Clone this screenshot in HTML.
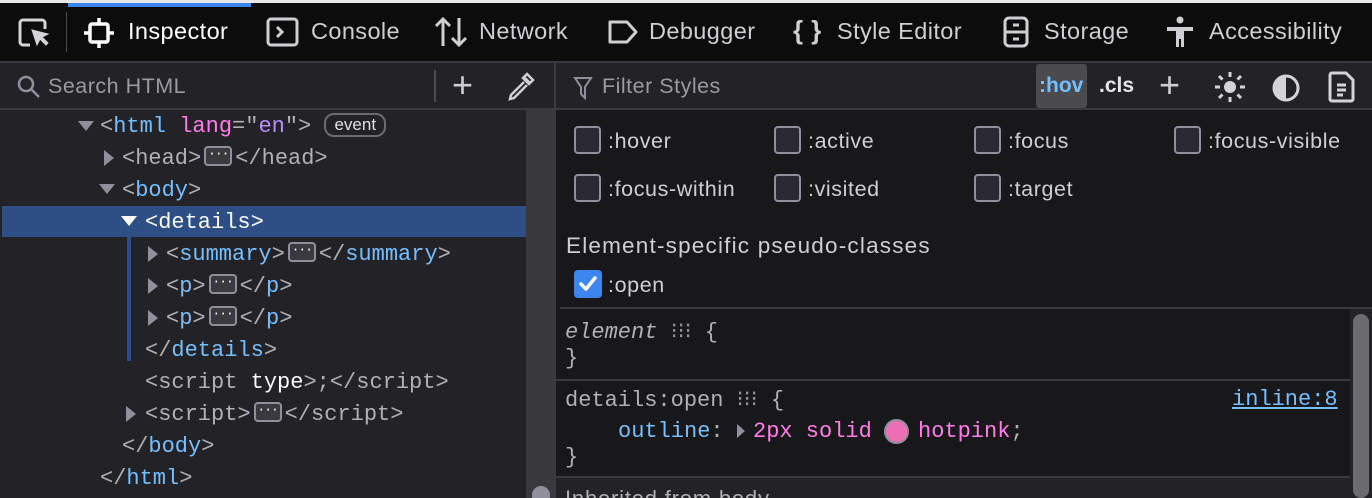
<!DOCTYPE html>
<html><head><meta charset="utf-8"><style>
*{margin:0;padding:0;box-sizing:border-box}
html,body{width:1372px;height:498px;overflow:hidden}
body{background:#18181b;font-family:"Liberation Sans",sans-serif;position:relative;color:#fbfbfe}
.a{position:absolute;white-space:nowrap}
.m{font-family:"Liberation Mono","DejaVu Sans Mono",monospace;font-size:22px}
.g{color:#b1b1b3}.b{color:#75bfff}.p{color:#ff7de9}.v{color:#b98eff}.w{color:#fbfbfe}
.tab{position:absolute;top:18px;font-size:23.5px;letter-spacing:0.4px;color:#cfcfd3}
.dots{display:inline-block;width:28px;height:20px;border:2px solid #8f8f9d;border-radius:4px;background:#3a3a3e;vertical-align:middle;margin:0 3px;position:relative;top:-2px;text-align:center;line-height:12px;font-size:13px;color:#fff;letter-spacing:-1px}
.tri{position:absolute;width:0;height:0}
.cb{position:absolute;width:27px;height:28px;border:2px solid #8f8f9d;border-radius:4px;background:#2b2a33}
.cl{position:absolute;font-size:21.5px;letter-spacing:0.6px;color:#cfcfd3}
</style></head><body>
<div class="a" style="left:0;top:0;width:1372px;height:3px;background:#e8e8ea"></div>
<div class="a" style="left:0;top:3px;width:1372px;height:58px;background:#0c0c0d"></div>
<div class="a" style="left:68px;top:3px;width:183px;height:4px;background:#3d86ef"></div>
<div class="a" style="left:66px;top:12px;width:1px;height:40px;background:#4a4a4f"></div>
<svg class="a" style="left:18px;top:18px" width="32" height="30" viewBox="0 0 32 30" fill="none" stroke="#d4d4d8" stroke-width="3"><path d="M12 27H5a3 3 0 0 1-3-3V5a3 3 0 0 1 3-3h19a3 3 0 0 1 3 3v6"/><path d="M14 12l5 15 3-6 6 6 2-2-6-6 6-3z" fill="#d4d4d8" stroke-width="1"/></svg>
<svg class="a" style="left:83px;top:16px" width="32" height="34" viewBox="0 0 32 34" fill="none" stroke="#fff" stroke-width="3.5"><rect x="7" y="8" width="18" height="18" rx="2"/><path d="M16 2v6M16 26v6M1 17h6M25 17h6"/></svg>
<div class="tab" style="left:128px;color:#fff">Inspector</div>
<svg class="a" style="left:266px;top:17px" width="34" height="30" viewBox="0 0 34 30" fill="none" stroke="#cfcfd3" stroke-width="3"><rect x="2" y="2" width="29" height="26" rx="3"/><path d="M11 10l5 5-5 5"/></svg>
<div class="tab" style="left:311px">Console</div>
<svg class="a" style="left:434px;top:16px" width="34" height="32" viewBox="0 0 34 32" fill="none" stroke="#cfcfd3" stroke-width="3"><path d="M9 30V3M2 10l7-7 7 7M25 2v27M18 22l7 7 7-7"/></svg>
<div class="tab" style="left:479px">Network</div>
<svg class="a" style="left:607px;top:19px" width="32" height="26" viewBox="0 0 32 26" fill="none" stroke="#cfcfd3" stroke-width="3"><path d="M3 3h17l9 10-9 10H3z" stroke-linejoin="round"/></svg>
<div class="tab" style="left:649px">Debugger</div>
<div class="tab" style="left:793px;font-size:26px;top:15px;font-weight:bold">{ }</div>
<div class="tab" style="left:837px">Style Editor</div>
<svg class="a" style="left:1003px;top:16px" width="26" height="32" viewBox="0 0 26 32" fill="none" stroke="#cfcfd3" stroke-width="3"><rect x="2" y="2" width="22" height="28" rx="4"/><path d="M2 16h22M10 9h6M10 23h6"/></svg>
<div class="tab" style="left:1044px">Storage</div>
<svg class="a" style="left:1166px;top:16px" width="28" height="32" viewBox="0 0 28 32"><circle cx="14" cy="4" r="3.5" fill="#cfcfd3"/><path d="M1 11h26v4h-9v16h-3v-8h-2v8h-3V15H1z" fill="#cfcfd3"/></svg>
<div class="tab" style="left:1209px">Accessibility</div>

<div class="a" style="left:0;top:61px;width:556px;height:49px;background:#232327;border-top:2px solid #3a3a3e;border-bottom:2px solid #3a3a3e"></div>
<svg class="a" style="left:17px;top:75px" width="24" height="24" viewBox="0 0 24 24" fill="none" stroke="#8f8f9d" stroke-width="2.5"><circle cx="9" cy="9" r="7"/><path d="M14 14l8 8"/></svg>
<div class="a" style="left:48px;top:74px;font-size:21.5px;letter-spacing:0.5px;color:#9a9aa0">Search HTML</div>
<div class="a" style="left:434px;top:70px;width:2px;height:32px;background:#4a4a4f"></div>
<div class="a" style="left:452px;top:64px;font-size:36px;color:#cfcfd3;font-weight:300">+</div>
<svg class="a" style="left:507px;top:72px" width="28" height="30" viewBox="0 0 28 30" fill="none" stroke="#cfcfd3" stroke-width="2.5"><path d="M17 5l6 6M20 2l6 6-4 4-6-6zM17 10L4 23l-1 4 4-1 13-13"/></svg>
<div class="a" style="left:554px;top:61px;width:2px;height:437px;background:#3a3a3e"></div>
<div class="a" style="left:556px;top:61px;width:816px;height:49px;background:#232327;border-top:2px solid #3a3a3e;border-bottom:2px solid #3a3a3e"></div>
<svg class="a" style="left:573px;top:76px" width="20" height="24" viewBox="0 0 20 24" fill="none" stroke="#8f8f9d" stroke-width="2"><path d="M2 2h16l-6 9v11l-4-4v-7z"/></svg>
<div class="a" style="left:602px;top:74px;font-size:21.5px;letter-spacing:0.5px;color:#9a9aa0">Filter Styles</div>
<div class="a" style="left:1036px;top:64px;width:51px;height:44px;background:#4a4a4f;border-radius:3px"></div>
<div class="a" style="left:1039px;top:74px;font-size:21px;font-weight:bold;color:#75bfff">:hov</div>
<div class="a" style="left:1099px;top:74px;font-size:21px;font-weight:bold;color:#e6e6ea">.cls</div>
<div class="a" style="left:1159px;top:64px;font-size:36px;color:#cfcfd3;font-weight:300">+</div>
<svg class="a" style="left:1214px;top:71px" width="32" height="32" viewBox="0 0 32 32" stroke="#d4d4d8" stroke-width="3" fill="#d4d4d8"><circle cx="16" cy="16" r="6" stroke="none"/><path d="M16 1v5M16 26v5M1 16h5M26 16h5M5 5l3.5 3.5M23.5 23.5L27 27M5 27l3.5-3.5M23.5 8.5L27 5"/></svg>
<svg class="a" style="left:1271px;top:73px" width="30" height="30" viewBox="0 0 30 30"><circle cx="15" cy="15" r="12" fill="none" stroke="#d4d4d8" stroke-width="3"/><path d="M15 3A12 12 0 0 0 15 27Z" fill="#d4d4d8"/></svg>
<svg class="a" style="left:1328px;top:71px" width="28" height="32" viewBox="0 0 28 32" fill="none" stroke="#d4d4d8" stroke-width="3"><path d="M4 2h14l7 7v19a2 2 0 0 1-2 2H4a2 2 0 0 1-2-2V4a2 2 0 0 1 2-2z"/><path d="M9 14h9M9 19h9M9 24h6"/></svg>

<!-- left tree -->
<div class="a" style="left:0;top:110px;width:526px;height:388px;background:#232327"></div>
<div class="a" style="left:526px;top:110px;width:28px;height:388px;background:#38383d"></div>
<div class="a" style="left:532px;top:486px;width:18px;height:20px;border-radius:9px;background:#8f8f9d"></div>
<div class="a" style="left:2px;top:206px;width:524px;height:31px;background:#2d4f85"></div>
<div class="a" style="left:127px;top:237px;width:4px;height:124px;background:#2d4f85"></div>
<div class="tri" style="left:78px;top:121px;border-left:8px solid transparent;border-right:8px solid transparent;border-top:10px solid #8f8f9d"></div>
<div class="tri" style="left:104px;top:150px;border-top:8px solid transparent;border-bottom:8px solid transparent;border-left:10px solid #8f8f9d"></div>
<div class="tri" style="left:99px;top:184px;border-left:8px solid transparent;border-right:8px solid transparent;border-top:10px solid #8f8f9d"></div>
<div class="tri" style="left:121px;top:216px;border-left:8px solid transparent;border-right:8px solid transparent;border-top:10px solid #fff"></div>
<div class="tri" style="left:148px;top:246px;border-top:8px solid transparent;border-bottom:8px solid transparent;border-left:10px solid #8f8f9d"></div>
<div class="tri" style="left:148px;top:278px;border-top:8px solid transparent;border-bottom:8px solid transparent;border-left:10px solid #8f8f9d"></div>
<div class="tri" style="left:148px;top:310px;border-top:8px solid transparent;border-bottom:8px solid transparent;border-left:10px solid #8f8f9d"></div>
<div class="tri" style="left:126px;top:406px;border-top:8px solid transparent;border-bottom:8px solid transparent;border-left:10px solid #8f8f9d"></div>
<div class="a m g" style="left:100px;top:114px">&lt;<span class="b">html</span> <span class="p">lang</span>="<span class="v">en</span>"&gt; <span style="display:inline-block;border:2px solid #6b6b70;border-radius:10px;padding:0 8px;font-family:'Liberation Sans',sans-serif;font-size:17px;color:#e0e0e4;line-height:20px;position:relative;top:-2px">event</span></div>
<div class="a m g" style="left:122px;top:146px">&lt;head&gt;<span class="dots">···</span>&lt;/head&gt;</div>
<div class="a m g" style="left:122px;top:178px">&lt;<span class="b">body</span>&gt;</div>
<div class="a m w" style="left:145px;top:210px">&lt;details&gt;</div>
<div class="a m g" style="left:166px;top:242px">&lt;<span class="b">summary</span>&gt;<span class="dots">···</span>&lt;/<span class="b">summary</span>&gt;</div>
<div class="a m g" style="left:166px;top:274px">&lt;<span class="b">p</span>&gt;<span class="dots">···</span>&lt;/<span class="b">p</span>&gt;</div>
<div class="a m g" style="left:166px;top:306px">&lt;<span class="b">p</span>&gt;<span class="dots">···</span>&lt;/<span class="b">p</span>&gt;</div>
<div class="a m g" style="left:145px;top:338px">&lt;/<span class="b">details</span>&gt;</div>
<div class="a m g" style="left:145px;top:370px">&lt;script <span class="w">type</span>&gt;;&lt;/script&gt;</div>
<div class="a m g" style="left:145px;top:402px">&lt;script&gt;<span class="dots">···</span>&lt;/script&gt;</div>
<div class="a m g" style="left:122px;top:434px">&lt;/<span class="b">body</span>&gt;</div>
<div class="a m g" style="left:100px;top:466px">&lt;/<span class="b">html</span>&gt;</div>

<!-- right -->
<div class="cb" style="left:574px;top:126px"></div><div class="cl" style="left:608px;top:129px">:hover</div>
<div class="cb" style="left:774px;top:126px"></div><div class="cl" style="left:808px;top:129px">:active</div>
<div class="cb" style="left:974px;top:126px"></div><div class="cl" style="left:1008px;top:129px">:focus</div>
<div class="cb" style="left:1174px;top:126px"></div><div class="cl" style="left:1208px;top:129px">:focus-visible</div>
<div class="cb" style="left:574px;top:174px"></div><div class="cl" style="left:608px;top:177px">:focus-within</div>
<div class="cb" style="left:774px;top:174px"></div><div class="cl" style="left:808px;top:177px">:visited</div>
<div class="cb" style="left:974px;top:174px"></div><div class="cl" style="left:1008px;top:177px">:target</div>
<div class="cl" style="left:566px;top:233px;font-size:22.5px;letter-spacing:1.2px">Element-specific pseudo-classes</div>
<div class="a" style="left:574px;top:270px;width:28px;height:28px;border-radius:4px;background:#3d86ef"></div>
<svg class="a" style="left:578px;top:274px" width="20" height="20" viewBox="0 0 20 20" fill="none" stroke="#fff" stroke-width="3.5" stroke-linecap="round" stroke-linejoin="round"><path d="M3 10l5 5 9-11"/></svg>
<div class="cl" style="left:608px;top:273px">:open</div>
<div class="a" style="left:560px;top:307px;width:812px;height:2px;background:#3a3a3e"></div>
<div class="a" style="left:556px;top:309px;width:794px;height:189px;background:#18181b"></div>
<div class="a" style="left:1350px;top:309px;width:22px;height:189px;background:#232327"></div>
<div class="a" style="left:1353px;top:314px;width:16px;height:184px;border-radius:8px;background:#6b6b70"></div>
<div class="a m g" style="left:565px;top:319px"><i style="font-style:italic">element</i> <span style="color:#8f8f9d">⁝⁝⁝</span> {</div>
<div class="a m g" style="left:565px;top:346px">}</div>
<div class="a" style="left:556px;top:379px;width:794px;height:2px;background:#3a3a3e"></div>
<div class="a m g" style="left:565px;top:387px">details:open <span style="color:#8f8f9d">⁝⁝⁝</span> {</div>
<div class="a m b" style="left:1232px;top:387px;text-decoration:underline">inline:8</div>
<div class="a m" style="left:618px;top:419px"><span class="b">outline</span><span class="g">:</span></div>
<div class="tri" style="left:737px;top:424px;border-top:7px solid transparent;border-bottom:7px solid transparent;border-left:8px solid #8f8f9d"></div>
<div class="a m p" style="left:753px;top:419px">2px solid</div>
<div class="a" style="left:884px;top:419px;width:25px;height:25px;border-radius:50%;background:#ec6fb4;border:2px solid #8f8f9d"></div>
<div class="a m p" style="left:918px;top:419px">hotpink<span class="g">;</span></div>
<div class="a m g" style="left:565px;top:445px">}</div>
<div class="a" style="left:556px;top:476px;width:794px;height:2px;background:#3a3a3e"></div>
<div class="a" style="left:556px;top:478px;width:794px;height:20px;background:#232327"></div>
<div class="a g" style="left:565px;top:486px;font-size:22px;letter-spacing:0.8px">Inherited from body</div>
</body></html>
